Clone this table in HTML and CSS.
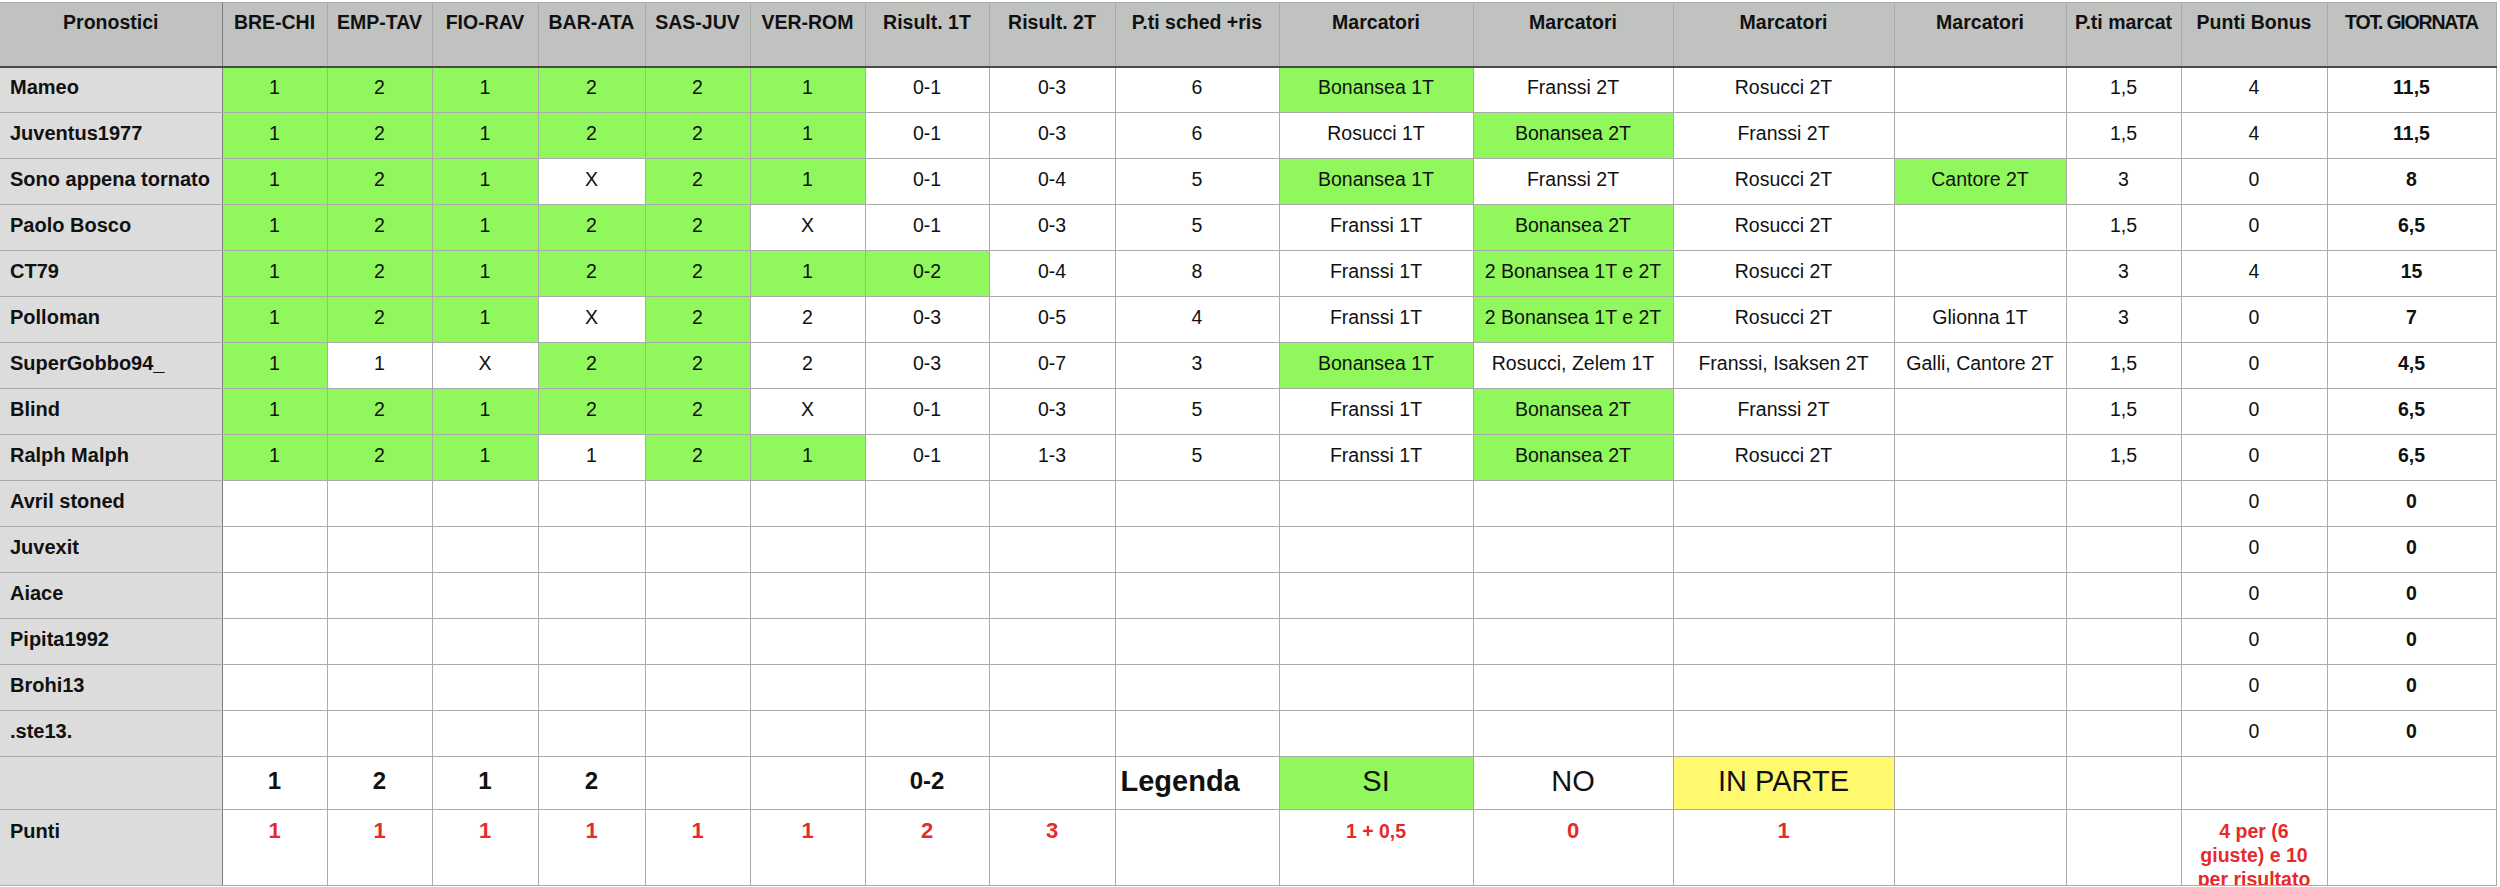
FILE: index.html
```html
<!DOCTYPE html>
<html lang="it">
<head>
<meta charset="utf-8">
<title>Pronostici</title>
<link rel="stylesheet" href="styles.css">
</head>
<body>
<table class="sheet">
  <colgroup>
    <col class="w-name"><col class="w-m1"><col class="w-m1"><col class="w-m3"><col class="w-m4"><col class="w-m1">
    <col class="w-vr"><col class="w-r1"><col class="w-r2"><col class="w-ps">
    <col class="w-k1"><col class="w-k2"><col class="w-k3"><col class="w-k4">
    <col class="w-pm"><col class="w-pb"><col class="w-tot">
  </colgroup>
  <thead>
    <tr class="head">
      <th class="name-h">Pronostici</th>
      <th>BRE-CHI</th><th>EMP-TAV</th><th>FIO-RAV</th><th>BAR-ATA</th><th>SAS-JUV</th><th>VER-ROM</th>
      <th>Risult. 1T</th><th>Risult. 2T</th><th>P.ti sched +ris</th>
      <th>Marcatori</th><th>Marcatori</th><th>Marcatori</th><th>Marcatori</th>
      <th>P.ti marcat</th><th>Punti Bonus</th><th class="tight">TOT. GIORNATA</th>
    </tr>
  </thead>
  <tbody>
    <tr>
      <th class="name">Mameo</th>
      <td class="g">1</td><td class="g">2</td><td class="g">1</td><td class="g">2</td><td class="g">2</td><td class="g">1</td>
      <td>0-1</td><td>0-3</td><td>6</td>
      <td class="g">Bonansea 1T</td><td>Franssi 2T</td><td>Rosucci 2T</td><td></td>
      <td>1,5</td><td>4</td><td class="tot">11,5</td>
    </tr>
    <tr>
      <th class="name">Juventus1977</th>
      <td class="g">1</td><td class="g">2</td><td class="g">1</td><td class="g">2</td><td class="g">2</td><td class="g">1</td>
      <td>0-1</td><td>0-3</td><td>6</td>
      <td>Rosucci 1T</td><td class="g">Bonansea 2T</td><td>Franssi 2T</td><td></td>
      <td>1,5</td><td>4</td><td class="tot">11,5</td>
    </tr>
    <tr>
      <th class="name">Sono appena tornato</th>
      <td class="g">1</td><td class="g">2</td><td class="g">1</td><td>X</td><td class="g">2</td><td class="g">1</td>
      <td>0-1</td><td>0-4</td><td>5</td>
      <td class="g">Bonansea 1T</td><td>Franssi 2T</td><td>Rosucci 2T</td><td class="g">Cantore 2T</td>
      <td>3</td><td>0</td><td class="tot">8</td>
    </tr>
    <tr>
      <th class="name">Paolo Bosco</th>
      <td class="g">1</td><td class="g">2</td><td class="g">1</td><td class="g">2</td><td class="g">2</td><td>X</td>
      <td>0-1</td><td>0-3</td><td>5</td>
      <td>Franssi 1T</td><td class="g">Bonansea 2T</td><td>Rosucci 2T</td><td></td>
      <td>1,5</td><td>0</td><td class="tot">6,5</td>
    </tr>
    <tr>
      <th class="name">CT79</th>
      <td class="g">1</td><td class="g">2</td><td class="g">1</td><td class="g">2</td><td class="g">2</td><td class="g">1</td>
      <td class="g">0-2</td><td>0-4</td><td>8</td>
      <td>Franssi 1T</td><td class="g">2 Bonansea 1T e 2T</td><td>Rosucci 2T</td><td></td>
      <td>3</td><td>4</td><td class="tot">15</td>
    </tr>
    <tr>
      <th class="name">Polloman</th>
      <td class="g">1</td><td class="g">2</td><td class="g">1</td><td>X</td><td class="g">2</td><td>2</td>
      <td>0-3</td><td>0-5</td><td>4</td>
      <td>Franssi 1T</td><td class="g">2 Bonansea 1T e 2T</td><td>Rosucci 2T</td><td>Glionna 1T</td>
      <td>3</td><td>0</td><td class="tot">7</td>
    </tr>
    <tr>
      <th class="name">SuperGobbo94_</th>
      <td class="g">1</td><td>1</td><td>X</td><td class="g">2</td><td class="g">2</td><td>2</td>
      <td>0-3</td><td>0-7</td><td>3</td>
      <td class="g">Bonansea 1T</td><td>Rosucci, Zelem 1T</td><td>Franssi, Isaksen 2T</td><td>Galli, Cantore 2T</td>
      <td>1,5</td><td>0</td><td class="tot">4,5</td>
    </tr>
    <tr>
      <th class="name">Blind</th>
      <td class="g">1</td><td class="g">2</td><td class="g">1</td><td class="g">2</td><td class="g">2</td><td>X</td>
      <td>0-1</td><td>0-3</td><td>5</td>
      <td>Franssi 1T</td><td class="g">Bonansea 2T</td><td>Franssi 2T</td><td></td>
      <td>1,5</td><td>0</td><td class="tot">6,5</td>
    </tr>
    <tr>
      <th class="name">Ralph Malph</th>
      <td class="g">1</td><td class="g">2</td><td class="g">1</td><td>1</td><td class="g">2</td><td class="g">1</td>
      <td>0-1</td><td>1-3</td><td>5</td>
      <td>Franssi 1T</td><td class="g">Bonansea 2T</td><td>Rosucci 2T</td><td></td>
      <td>1,5</td><td>0</td><td class="tot">6,5</td>
    </tr>
    <tr>
      <th class="name">Avril stoned</th>
      <td></td><td></td><td></td><td></td><td></td><td></td><td></td><td></td><td></td>
      <td></td><td></td><td></td><td></td><td></td><td>0</td><td class="tot">0</td>
    </tr>
    <tr>
      <th class="name">Juvexit</th>
      <td></td><td></td><td></td><td></td><td></td><td></td><td></td><td></td><td></td>
      <td></td><td></td><td></td><td></td><td></td><td>0</td><td class="tot">0</td>
    </tr>
    <tr>
      <th class="name">Aiace</th>
      <td></td><td></td><td></td><td></td><td></td><td></td><td></td><td></td><td></td>
      <td></td><td></td><td></td><td></td><td></td><td>0</td><td class="tot">0</td>
    </tr>
    <tr>
      <th class="name">Pipita1992</th>
      <td></td><td></td><td></td><td></td><td></td><td></td><td></td><td></td><td></td>
      <td></td><td></td><td></td><td></td><td></td><td>0</td><td class="tot">0</td>
    </tr>
    <tr>
      <th class="name">Brohi13</th>
      <td></td><td></td><td></td><td></td><td></td><td></td><td></td><td></td><td></td>
      <td></td><td></td><td></td><td></td><td></td><td>0</td><td class="tot">0</td>
    </tr>
    <tr>
      <th class="name">.ste13.</th>
      <td></td><td></td><td></td><td></td><td></td><td></td><td></td><td></td><td></td>
      <td></td><td></td><td></td><td></td><td></td><td>0</td><td class="tot">0</td>
    </tr>
    <tr class="legend">
      <th class="name"></th>
      <td class="big">1</td><td class="big">2</td><td class="big">1</td><td class="big">2</td><td></td><td></td>
      <td class="big">0-2</td><td></td>
      <td class="legend-title">Legenda</td>
      <td class="g key">SI</td><td class="key">NO</td><td class="y key">IN PARTE</td>
      <td></td><td></td><td></td><td></td>
    </tr>
    <tr class="points">
      <th class="name">Punti</th>
      <td class="red">1</td><td class="red">1</td><td class="red">1</td><td class="red">1</td><td class="red">1</td><td class="red">1</td>
      <td class="red">2</td><td class="red">3</td><td></td>
      <td class="red small">1 + 0,5</td><td class="red">0</td><td class="red">1</td>
      <td></td><td></td>
      <td class="red small"><div class="note">4 per (6 giuste) e 10 per risultato</div></td>
      <td></td>
    </tr>
  </tbody>
</table>
</body>
</html>
```

FILE: styles.css
```css
html, body {
  margin: 0;
  padding: 0;
  background: #ffffff;
}

body {
  font-family: "Liberation Sans", Arial, Helvetica, sans-serif;
  color: #111111;
}

.sheet {
  border-collapse: collapse;
  table-layout: fixed;
  width: 2496px;
  margin-top: 2px;
  font-size: 19.5px;
}

.w-name { width: 222px; }
.w-m1 { width: 105px; }
.w-m3 { width: 106px; }
.w-m4 { width: 107px; }
.w-vr { width: 115px; }
.w-r1 { width: 124px; }
.w-r2 { width: 126px; }
.w-ps { width: 164px; }
.w-k1 { width: 194px; }
.w-k2 { width: 200px; }
.w-k3 { width: 221px; }
.w-k4 { width: 172px; }
.w-pm { width: 115px; }
.w-pb { width: 146px; }
.w-tot { width: 169px; }

.sheet th,
.sheet td {
  border: 1px solid #ababab;
  padding: 0 4px 4px;
  text-align: center;
  vertical-align: middle;
  white-space: nowrap;
  overflow: hidden;
  font-weight: normal;
}

.sheet tr > :first-child {
  border-left: 0;
}

.head {
  height: 64px;
}

.head th {
  background: #c0c2c0;
  font-weight: bold;
  vertical-align: top;
  padding-top: 8px;
  border-bottom: 2px solid #4a4a4a;
}

.head .tight {
  letter-spacing: -1.2px;
  padding-left: 0;
  padding-right: 0;
}

.sheet .name-h {
  border-right: 1px solid #7c7c7c;
}

tbody tr {
  height: 46px;
}

.sheet .name {
  background: #dcdcdc;
  text-align: left;
  padding-left: 10px;
  font-weight: bold;
  font-size: 20px;
  border-right: 1px solid #7c7c7c;
}

.sheet .g {
  background: #90f75c;
}

.sheet .y {
  background: #fff96e;
}

.sheet .tot {
  font-weight: bold;
}

.legend {
  height: 53px;
}

.sheet .big {
  font-weight: bold;
  font-size: 24px;
}

.sheet .legend-title {
  font-weight: bold;
  font-size: 29px;
  text-align: left;
  padding-left: 5px;
}

.sheet .key {
  font-size: 29px;
}

.points {
  height: 76px;
}

.points th,
.points td {
  vertical-align: top;
  padding-top: 9px;
  padding-bottom: 0;
  line-height: 24px;
}

.sheet .red {
  color: #e62a2a;
  font-weight: bold;
  font-size: 22px;
}

.sheet .small {
  font-size: 19.5px;
}

.note {
  white-space: normal;
  height: 66px;
  overflow: hidden;
  padding: 0 2px;
}
```
